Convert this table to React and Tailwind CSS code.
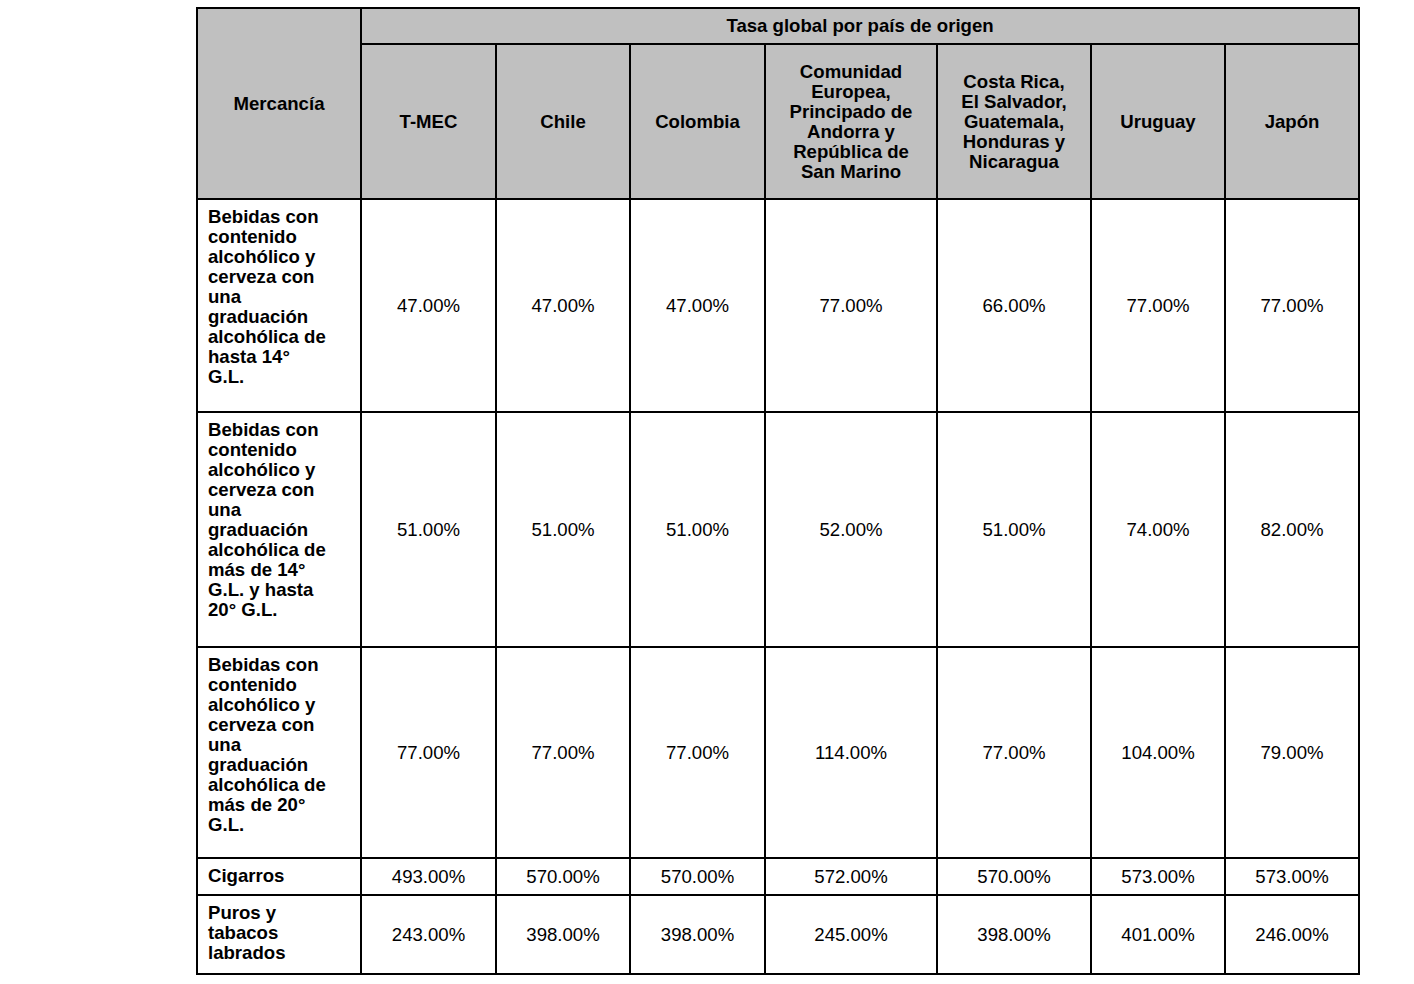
import React from "react";

const countries = [
  "T-MEC",
  "Chile",
  "Colombia",
  "Comunidad Europea, Principado de Andorra y República de San Marino",
  "Costa Rica, El Salvador, Guatemala, Honduras y Nicaragua",
  "Uruguay",
  "Japón",
];

const rows = [
  {
    label: "Bebidas con contenido alcohólico y cerveza con una graduación alcohólica de hasta 14° G.L.",
    h: "h-[213px]",
    values: ["47.00%", "47.00%", "47.00%", "77.00%", "66.00%", "77.00%", "77.00%"],
  },
  {
    label: "Bebidas con contenido alcohólico y cerveza con una graduación alcohólica de más de 14° G.L. y hasta 20° G.L.",
    h: "h-[235px]",
    values: ["51.00%", "51.00%", "51.00%", "52.00%", "51.00%", "74.00%", "82.00%"],
  },
  {
    label: "Bebidas con contenido alcohólico y cerveza con una graduación alcohólica de más de 20° G.L.",
    h: "h-[211px]",
    values: ["77.00%", "77.00%", "77.00%", "114.00%", "77.00%", "104.00%", "79.00%"],
  },
  {
    label: "Cigarros",
    h: "h-[37px]",
    values: ["493.00%", "570.00%", "570.00%", "572.00%", "570.00%", "573.00%", "573.00%"],
  },
  {
    label: "Puros y tabacos labrados",
    h: "h-[79px]",
    values: ["243.00%", "398.00%", "398.00%", "245.00%", "398.00%", "401.00%", "246.00%"],
  },
];

const colW = ["w-[164px]", "w-[135px]", "w-[134px]", "w-[135px]", "w-[172px]", "w-[154px]", "w-[134px]", "w-[134px]"];

export default function App() {
  return (
    <div
      className="min-h-[984px] bg-white pt-[7px] pl-[196px] text-black text-[18.6px] leading-[20px]"
      style={{ fontFamily: '"Liberation Sans", Arial, sans-serif' }}
    >
      <table className="border-collapse table-fixed w-[1164px]">
        <colgroup>
          {colW.map((w, i) => (
            <col key={i} className={w} />
          ))}
        </colgroup>
        <thead>
          <tr className="h-[36px]">
            <th rowSpan={2} className="border-2 border-black bg-[#c0c0c0] font-bold text-center align-middle px-[10px]">
              Mercancía
            </th>
            <th colSpan={7} className="border-2 border-black bg-[#c0c0c0] font-bold text-center align-middle">
              Tasa global por país de origen
            </th>
          </tr>
          <tr className="h-[155px]">
            {countries.map((c, i) => (
              <th key={i} className="border-2 border-black bg-[#c0c0c0] font-bold text-center align-middle px-[16px]">
                {c}
              </th>
            ))}
          </tr>
        </thead>
        <tbody>
          {rows.map((r, i) => (
            <tr key={i} className={r.h}>
              <td className="border-2 border-black font-bold text-left align-top pl-[10px] pr-[32px] pt-[7px]">
                {r.label}
              </td>
              {r.values.map((v, j) => (
                <td key={j} className="border-2 border-black text-center align-middle">
                  {v}
                </td>
              ))}
            </tr>
          ))}
        </tbody>
      </table>
    </div>
  );
}
